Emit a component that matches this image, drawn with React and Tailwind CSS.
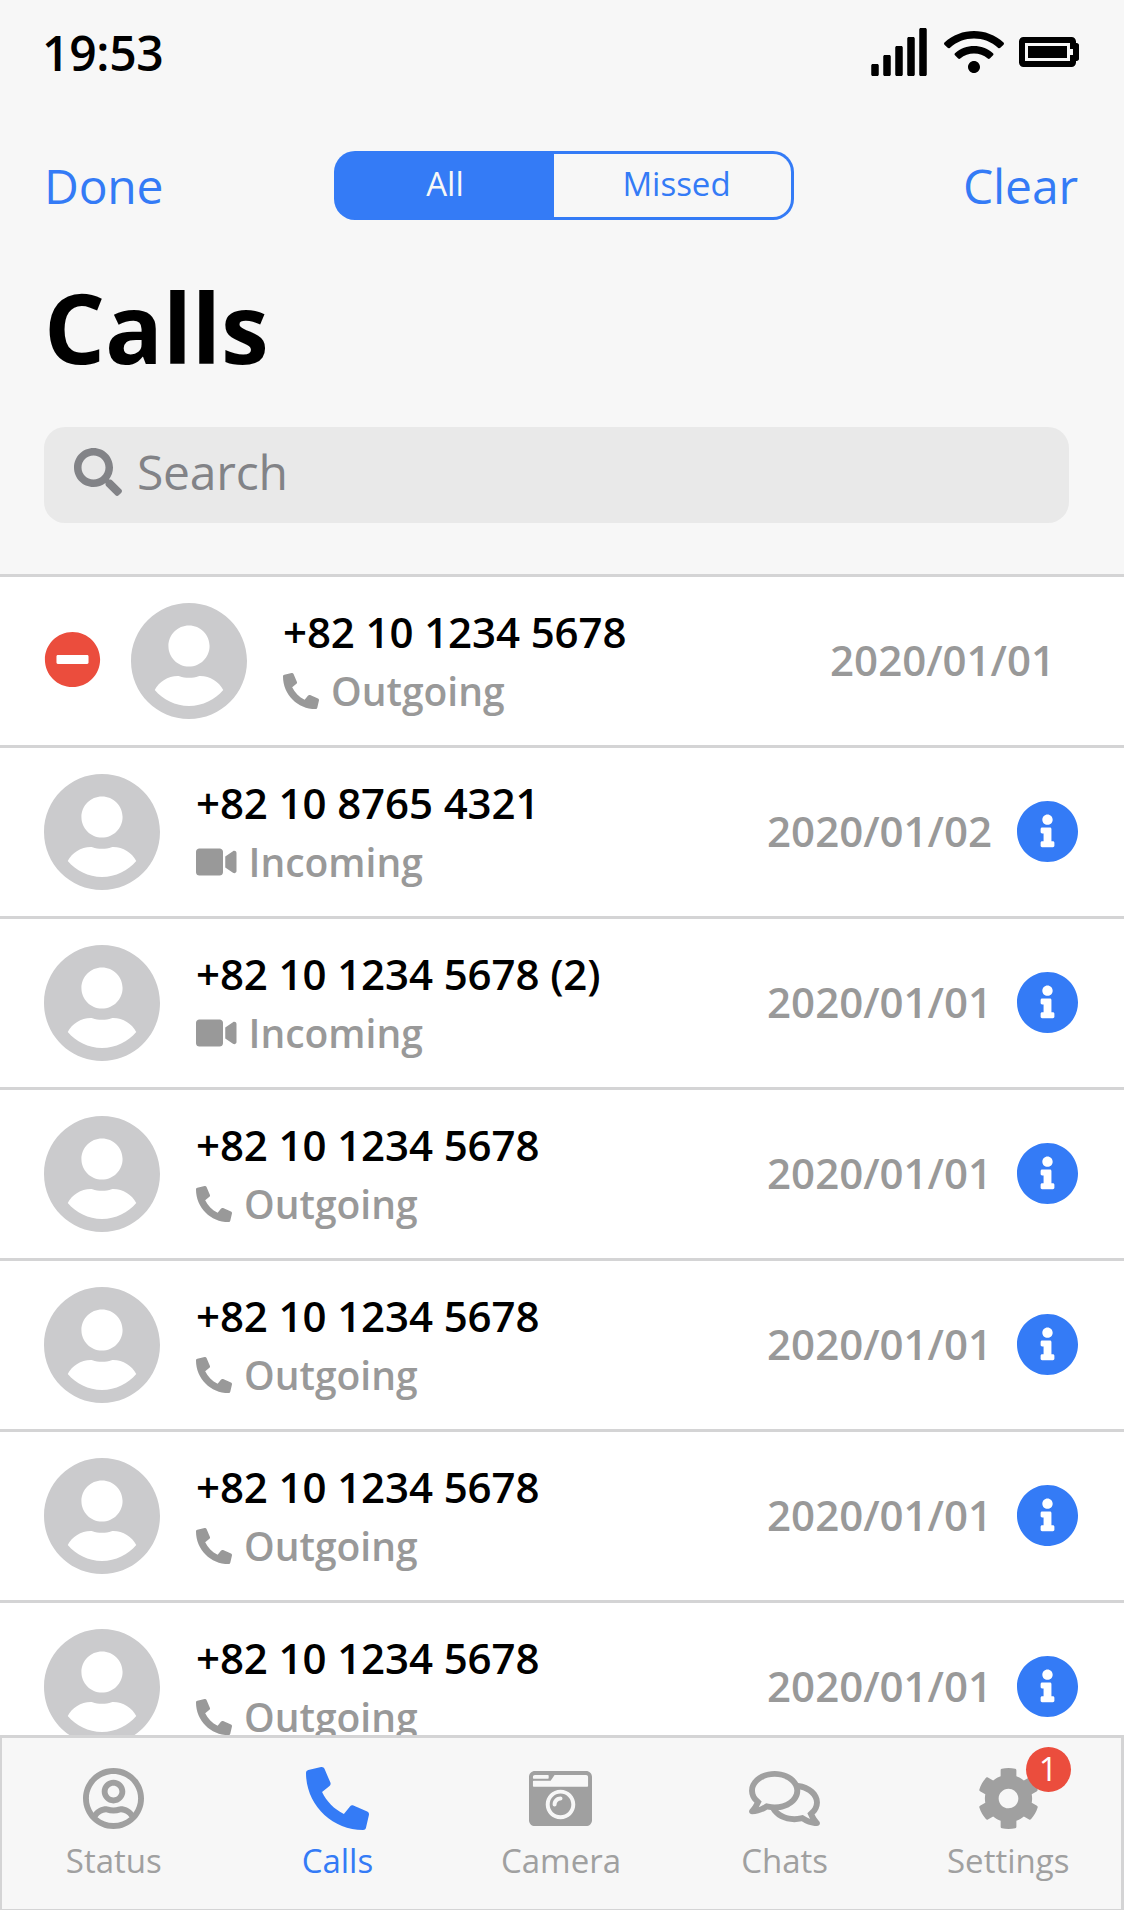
import {
  FaBatteryFull,
  FaCameraRetro,
  FaCog,
  FaInfoCircle,
  FaMinusCircle,
  FaPhone,
  FaRegComments,
  FaRegUserCircle,
  FaSearch,
  FaSignal,
  FaUserCircle,
  FaVideo,
  FaWifi,
} from "react-icons/fa";

const calls = [
  { name: "+82 10 1234 5678", type: "Outgoing", date: "2020/01/01", editing: true },
  { name: "+82 10 8765 4321", type: "Incoming", date: "2020/01/02" },
  { name: "+82 10 1234 5678 (2)", type: "Incoming", date: "2020/01/01" },
  { name: "+82 10 1234 5678", type: "Outgoing", date: "2020/01/01" },
  { name: "+82 10 1234 5678", type: "Outgoing", date: "2020/01/01" },
  { name: "+82 10 1234 5678", type: "Outgoing", date: "2020/01/01" },
  { name: "+82 10 1234 5678", type: "Outgoing", date: "2020/01/01" },
];

const tabs = [
  { label: "Status", icon: <FaRegUserCircle className="h-[63px] w-[61px]" /> },
  { label: "Calls", icon: <FaPhone className="h-[63px] w-[63px] -scale-x-100" />, active: true },
  { label: "Camera", icon: <FaCameraRetro className="h-[63px] w-[63px]" /> },
  { label: "Chats", icon: <FaRegComments className="h-[63px] w-[71px]" /> },
  { label: "Settings", icon: <FaCog className="h-[63px] w-[63px]" />, badge: 1 },
];

function StatusBar() {
  return (
    <div className="flex h-[103px] items-center justify-between pl-[42px] pr-[45px]">
      <span className="pt-px text-[48px] leading-[65px] font-semibold tracking-[-0.3px]">19:53</span>
      <div className="flex items-center gap-[15px] pt-px">
        <FaSignal className="h-[48px] w-[60px]" />
        <FaWifi className="h-[48px] w-[60px]" />
        <FaBatteryFull className="h-[48px] w-[60px]" />
      </div>
    </div>
  );
}

function Header() {
  return (
    <header className="h-[577px] shrink-0 border-b-[3px] border-[#d4d4d5] bg-[#f7f7f7]">
      <StatusBar />
      <div className="grid h-[165px] grid-cols-[290px_460px_1fr] items-center pl-[44px] pr-[46px] text-[#347bf6]">
        <button className="text-left text-[48px] leading-[65px] tracking-[-0.2px]">Done</button>
        <div className="flex h-[69px] text-[33px] leading-[45px]">
          <button className="w-[220px] rounded-l-[21px] bg-[#347bf6] pb-[5px] pl-[2px] text-[#f7f7f7]">All</button>
          <button className="flex-1 rounded-r-[21px] border-[3px] border-l-0 border-[#347bf6] pb-[5px] pl-[8px]">
            Missed
          </button>
        </div>
        <button className="text-right text-[48px] leading-[65px] tracking-[-0.1px]">Clear</button>
      </div>
      <h1 className="h-[117px] pl-[44px] text-[96px] leading-[118px] font-bold tracking-[-0.2px]">Calls</h1>
      <div className="mt-[42px] ml-[44px] flex h-[96px] w-[1025px] items-center gap-[15px] rounded-[21px] bg-[#e9e9e9] pb-[7px] pl-[30px] text-[48px] leading-[65px] tracking-[-0.2px] text-[#828387]">
        <FaSearch />
        <span>Search</span>
      </div>
    </header>
  );
}

function CallRow({ name, type, date, editing }) {
  return (
    <li className="flex h-[171px] items-center border-b-[3px] border-[#d4d4d5] pl-[44px] pr-[45px]">
      {editing && <FaMinusCircle className="mr-[30px] mb-[3px] h-[57px] w-[57px] text-[#eb4d3d]" />}
      <FaUserCircle className="h-[120px] w-[116px] text-[#cbcbcd]" />
      <div className="ml-[36px] flex-1">
        <p className="text-[42px] leading-[58px] font-semibold tracking-[-0.1px]">{name}</p>
        <p className="mt-px -mb-px flex items-center gap-[12px] text-[39px] leading-[58px] font-semibold text-[#999999]">
          {type === "Outgoing" ? (
            <FaPhone className="h-[36px] w-[36px] -scale-x-100" />
          ) : (
            <FaVideo className="h-[36px] w-[40.5px]" />
          )}
          {type}
        </p>
      </div>
      <span className={`pb-[2px] text-[42px] leading-[58px] font-semibold text-[#999999] ${editing ? "mr-[24px]" : ""}`}>
        {date}
      </span>
      {!editing && <FaInfoCircle className="mb-[2px] ml-[24px] h-[63px] w-[63px] text-[#347bf6]" />}
    </li>
  );
}

function TabBar() {
  return (
    <nav className="grid h-[175px] shrink-0 grid-cols-5 border border-t-[3px] border-r-[3px] border-l-2 border-[#d4d4d5] bg-[#f7f7f7] pt-[29px] pr-px">
      {tabs.map((tab) => (
        <div
          key={tab.label}
          className={`flex flex-col items-center ${tab.active ? "text-[#347bf6]" : "text-[#a0a0a0]"}`}
        >
          <div className="relative">
            {tab.icon}
            {tab.badge && (
              <span className="absolute -top-[20px] left-[49px] flex h-[45px] w-[45px] items-center justify-center rounded-full bg-[#eb4d3d] pb-[3px] text-[33px] leading-none text-white">
                {tab.badge}
              </span>
            )}
          </div>
          <span className="mt-[8px] text-[33px] leading-[45px]">{tab.label}</span>
        </div>
      ))}
    </nav>
  );
}

export default function App() {
  return (
    <div className="flex h-[1910px] w-[1124px] flex-col overflow-hidden bg-white font-['Open_Sans',sans-serif] text-black">
      <Header />
      <ul className="min-h-0 flex-1 overflow-hidden">
        {calls.map((call, i) => (
          <CallRow key={i} {...call} />
        ))}
      </ul>
      <TabBar />
    </div>
  );
}
